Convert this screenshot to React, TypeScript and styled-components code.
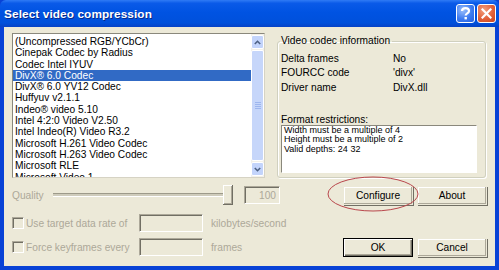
import styled, { createGlobalStyle } from "styled-components";

const GlobalStyle = createGlobalStyle`
    html, body{
        margin: 0;
        padding: 0;
        width: 499px;
        height: 270px;
        overflow: hidden;
        background: #ECE9D8;
    }
    body{
        font-family: "Liberation Sans", Arial, sans-serif;
        font-size: 10px;
    }
`;

const FACE = "#ECE9D8";
const GREY_TEXT = "#ACA899";

const Window = styled.div`
    position: relative;
    width: 499px;
    height: 270px;
    display: flex;
    flex-direction: column;
    background: #0842D6;
`;

const TitleBar = styled.div`
    height: 27px;
    flex: none;
    display: flex;
    align-items: center;
    padding: 0 3px 0 4px;
    background: linear-gradient(to bottom, #2F7BF5 0%, #0A5AE8 12%, #0053E2 45%, #0050DB 85%, #0642C6 100%);
    border-radius: 6px 6px 0 0;
`;

const Title = styled.div`
    flex: 1;
    color: #fff;
    font-family: "Liberation Sans", Arial, sans-serif;
    font-weight: bold;
    font-size: 11.8px;
    letter-spacing: 0.1px;
    text-shadow: 1px 1px 0 #0A2A8A;
    padding-top: 1px;
`;

const CaptionButton = styled.div<{ $kind: "help" | "close" }>`
    width: 19px;
    height: 19px;
    margin-left: 2px;
    box-sizing: border-box;
    border: 1px solid #fff;
    border-radius: 3px;
    display: flex;
    align-items: center;
    justify-content: center;
    background: ${(p) =>
        p.$kind === "close"
            ? "radial-gradient(circle at 35% 30%, #F2A07E 0%, #E2613A 55%, #C8431C 100%)"
            : "radial-gradient(circle at 35% 30%, #9CC0FB 0%, #3D7BF0 55%, #2660E0 100%)"};
    svg{
        display: block;
    }
`;

const Body = styled.div`
    flex: 1;
    margin: 0 4px 4px 4px;
    background: ${FACE};
    padding: 6px 0 0 8px;
    display: flex;
    flex-direction: column;
`;

const TopRow = styled.div`
    display: flex;
    align-items: flex-start;
`;

const ListBox = styled.div`
    width: 253px;
    height: 145px;
    box-sizing: border-box;
    border: 1px solid #8A887C;
    border-right-color: #D6D3C4;
    border-bottom-color: #D6D3C4;
    background: #fff;
    display: flex;
    overflow: hidden;
`;

const ListItems = styled.div`
    flex: 1;
    padding-top: 2px;
`;

const Item = styled.div<{ $selected?: boolean }>`
    height: 11.3px;
    line-height: 11px;
    padding-left: 2px;
    font-size: 10.2px;
    white-space: nowrap;
    color: ${(p) => (p.$selected ? "#fff" : "#000")};
    background: ${(p) => (p.$selected ? "#316AC5" : "transparent")};
`;

const ScrollBar = styled.div`
    width: 13px;
    display: flex;
    flex-direction: column;
    background: #F3F1EA;
    padding: 1px 0;
    box-sizing: border-box;
`;

const ScrollArrow = styled.div`
    height: 14px;
    flex: none;
    box-sizing: border-box;
    border: 1px solid #fff;
    border-radius: 2px;
    background: #C3D4FB;
    display: flex;
    align-items: center;
    justify-content: center;
`;

const ScrollThumb = styled.div`
    flex: 1;
    margin: 1px 0;
    box-sizing: border-box;
    border: 1px solid #fff;
    border-radius: 2px;
    background: #C6D6FA;
    display: flex;
    flex-direction: column;
    align-items: center;
    justify-content: center;
    gap: 1px;
    span{
        width: 6px;
        height: 1px;
        background: #9DB6EE;
    }
`;

const GroupBox = styled.fieldset`
    margin: 2px 0 0 12px;
    width: 209px;
    height: 143px;
    box-sizing: border-box;
    padding: 0 2px;
    border: 1px solid #D0D0BF;
    box-shadow: inset 1px 1px 0 #fff, 1px 1px 0 #fff;
    border-radius: 3px;
`;

const Legend = styled.legend`
    padding: 0 2px 0 1px;
    font-size: 10.2px;
    line-height: 12px;
    color: #000;
`;

const InfoTable = styled.div`
    margin-top: 4px;
    display: grid;
    grid-template-columns: 112px auto;
    grid-auto-rows: 14.5px;
    align-items: center;
    padding-left: 1px;
    font-size: 10.2px;
`;

const RestrictLabel = styled.div`
    margin: 19px 0 0 1px;
    line-height: 11px;
    font-size: 10.2px;
`;

const RestrictBox = styled.div`
    margin-left: 1px;
    width: 196px;
    height: 48px;
    box-sizing: border-box;
    background: #fff;
    border: 1px solid #8A887C;
    border-right-color: #fff;
    border-bottom-color: #fff;
    padding: 0 0 0 2px;
    font-size: 9px;
    line-height: 9.6px;
`;

const Bottom = styled.div`
    margin-top: 7px;
    display: grid;
    grid-template-columns: 331px 144px;
`;

const Controls = styled.div`
    display: flex;
    flex-direction: column;
`;

const QualityRow = styled.div`
    height: 20px;
    display: flex;
    align-items: center;
`;

const Dim = styled.span<{ $width?: number; $gap?: number }>`
    color: ${GREY_TEXT};
    font-size: 10.2px;
    white-space: nowrap;
    width: ${(p) => (p.$width ? `${p.$width}px` : "auto")};
    margin-left: ${(p) => p.$gap ?? 0}px;
    flex: none;
`;

const Slider = styled.div`
    width: 180px;
    height: 20px;
    margin-right: 11px;
    display: flex;
    align-items: center;
`;

const SliderTrack = styled.div`
    flex: 1;
    height: 2px;
    border-top: 1px solid #9D9A8A;
    border-bottom: 1px solid #fff;
    background: #CFCCBC;
`;

const SliderThumb = styled.div`
    width: 10px;
    height: 20px;
    box-sizing: border-box;
    background: ${FACE};
    border-right: 1px solid #716F64;
    border-bottom: 1px solid #716F64;
    box-shadow: inset 1px 1px 0 #fff, inset -1px -1px 0 #ACA899;
`;

const Field = styled.div<{ $width: number }>`
    width: ${(p) => p.$width}px;
    height: 18px;
    box-sizing: border-box;
    border: 1px solid #ACA899;
    border-right-color: #fff;
    border-bottom-color: #fff;
    box-shadow: inset 1px 1px 0 #716F64;
    background: ${FACE};
    color: ${GREY_TEXT};
    font-size: 10.2px;
    text-align: right;
    padding: 3px 3px 0 0;
    flex: none;
`;

const CheckRow = styled.div<{ $top: number }>`
    margin-top: ${(p) => p.$top}px;
    height: 18px;
    display: flex;
    align-items: center;
`;

const CheckBox = styled.div`
    width: 12px;
    height: 12px;
    box-sizing: border-box;
    border: 1px solid #ACA899;
    border-right-color: #fff;
    border-bottom-color: #fff;
    box-shadow: inset 1px 1px 0 #716F64;
    background: ${FACE};
    margin-right: 2px;
    flex: none;
`;

const Buttons = styled.div`
    display: flex;
    flex-direction: column;
    padding-top: 1px;
`;

const ButtonRow = styled.div<{ $top?: number }>`
    margin-top: ${(p) => p.$top ?? 0}px;
    display: flex;
    gap: 4px;
`;

const Button = styled.div<{ $default?: boolean }>`
    width: 70px;
    height: 19px;
    box-sizing: border-box;
    display: flex;
    align-items: center;
    justify-content: center;
    background: ${FACE};
    color: #000;
    font-size: 10.2px;
    border: 1px solid ${(p) => (p.$default ? "#000" : "transparent")};
    box-shadow: ${(p) =>
        p.$default
            ? "inset 1px 1px 0 #fff, inset -1px -1px 0 #716F64, inset -2px -2px 0 #ACA899"
            : "1px 1px 0 #716F64, inset -1px -1px 0 #ACA899, inset 1px 1px 0 #fff"};
`;

const Annotation = styled.svg`
    position: absolute;
    left: 0;
    top: 0;
    pointer-events: none;
`;

const codecs = [
    "(Uncompressed RGB/YCbCr)",
    "Cinepak Codec by Radius",
    "Codec Intel IYUV",
    "DivX® 6.0 Codec",
    "DivX® 6.0 YV12 Codec",
    "Huffyuv v2.1.1",
    "Indeo® video 5.10",
    "Intel 4:2:0 Video V2.50",
    "Intel Indeo(R) Video R3.2",
    "Microsoft H.261 Video Codec",
    "Microsoft H.263 Video Codec",
    "Microsoft RLE",
    "Microsoft Video 1",
];

const info = [
    ["Delta frames", "No"],
    ["FOURCC code", "'divx'"],
    ["Driver name", "DivX.dll"],
];

const App = () => {
    return (
        <Window>
            <GlobalStyle />
            <TitleBar>
                <Title>Select video compression</Title>
                <CaptionButton $kind="help">
                    <svg width="11" height="13" viewBox="0 0 11 13">
                        <path d="M2 4 Q2 1.2 5.5 1.2 Q9 1.2 9 4 Q9 5.6 7 6.6 Q5.7 7.3 5.7 8.6" fill="none" stroke="#fff" strokeWidth="2.2" />
                        <rect x="4.5" y="10" width="2.4" height="2.4" fill="#fff" />
                    </svg>
                </CaptionButton>
                <CaptionButton $kind="close">
                    <svg width="11" height="11" viewBox="0 0 11 11">
                        <path d="M1.5 1.5 L9.5 9.5 M9.5 1.5 L1.5 9.5" stroke="#fff" strokeWidth="2.2" strokeLinecap="square" />
                    </svg>
                </CaptionButton>
            </TitleBar>
            <Body>
                <TopRow>
                    <ListBox>
                        <ListItems>
                            {codecs.map((c, i) => (
                                <Item key={c} $selected={i === 3}>{c}</Item>
                            ))}
                        </ListItems>
                        <ScrollBar>
                            <ScrollArrow>
                                <svg width="7" height="5" viewBox="0 0 7 5">
                                    <path d="M0.8 4 L3.5 1.3 L6.2 4" fill="none" stroke="#4D6185" strokeWidth="1.6" />
                                </svg>
                            </ScrollArrow>
                            <ScrollThumb>
                                <span /><span /><span /><span />
                            </ScrollThumb>
                            <ScrollArrow>
                                <svg width="7" height="5" viewBox="0 0 7 5">
                                    <path d="M0.8 1 L3.5 3.7 L6.2 1" fill="none" stroke="#4D6185" strokeWidth="1.6" />
                                </svg>
                            </ScrollArrow>
                        </ScrollBar>
                    </ListBox>
                    <GroupBox>
                        <Legend>Video codec information</Legend>
                        <InfoTable>
                            {info.flatMap(([k, v]) => [
                                <span key={k}>{k}</span>,
                                <span key={v}>{v}</span>,
                            ])}
                        </InfoTable>
                        <RestrictLabel>Format restrictions:</RestrictLabel>
                        <RestrictBox>
                            <div>Width must be a multiple of 4</div>
                            <div>Height must be a multiple of 2</div>
                            <div>Valid depths: 24 32</div>
                        </RestrictBox>
                    </GroupBox>
                </TopRow>
                <Bottom>
                    <Controls>
                        <QualityRow>
                            <Dim $width={41}>Quality</Dim>
                            <Slider>
                                <SliderTrack />
                                <SliderThumb />
                            </Slider>
                            <Field $width={36}>100</Field>
                        </QualityRow>
                        <CheckRow $top={9}>
                            <CheckBox />
                            <Dim $width={113}>Use target data rate of</Dim>
                            <Field $width={64} />
                            <Dim $gap={8}>kilobytes/second</Dim>
                        </CheckRow>
                        <CheckRow $top={6}>
                            <CheckBox />
                            <Dim $width={113}>Force keyframes every</Dim>
                            <Field $width={64} />
                            <Dim $gap={8}>frames</Dim>
                        </CheckRow>
                    </Controls>
                    <Buttons>
                        <ButtonRow>
                            <Button>Configure</Button>
                            <Button>About</Button>
                        </ButtonRow>
                        <ButtonRow $top={33}>
                            <Button $default>OK</Button>
                            <Button>Cancel</Button>
                        </ButtonRow>
                    </Buttons>
                </Bottom>
            </Body>
            <Annotation width="499" height="270" viewBox="0 0 499 270">
                <ellipse cx="373" cy="194" rx="45" ry="17" fill="none" stroke="#B9474C" strokeWidth="1" />
            </Annotation>
        </Window>
    );
};

export default App;
